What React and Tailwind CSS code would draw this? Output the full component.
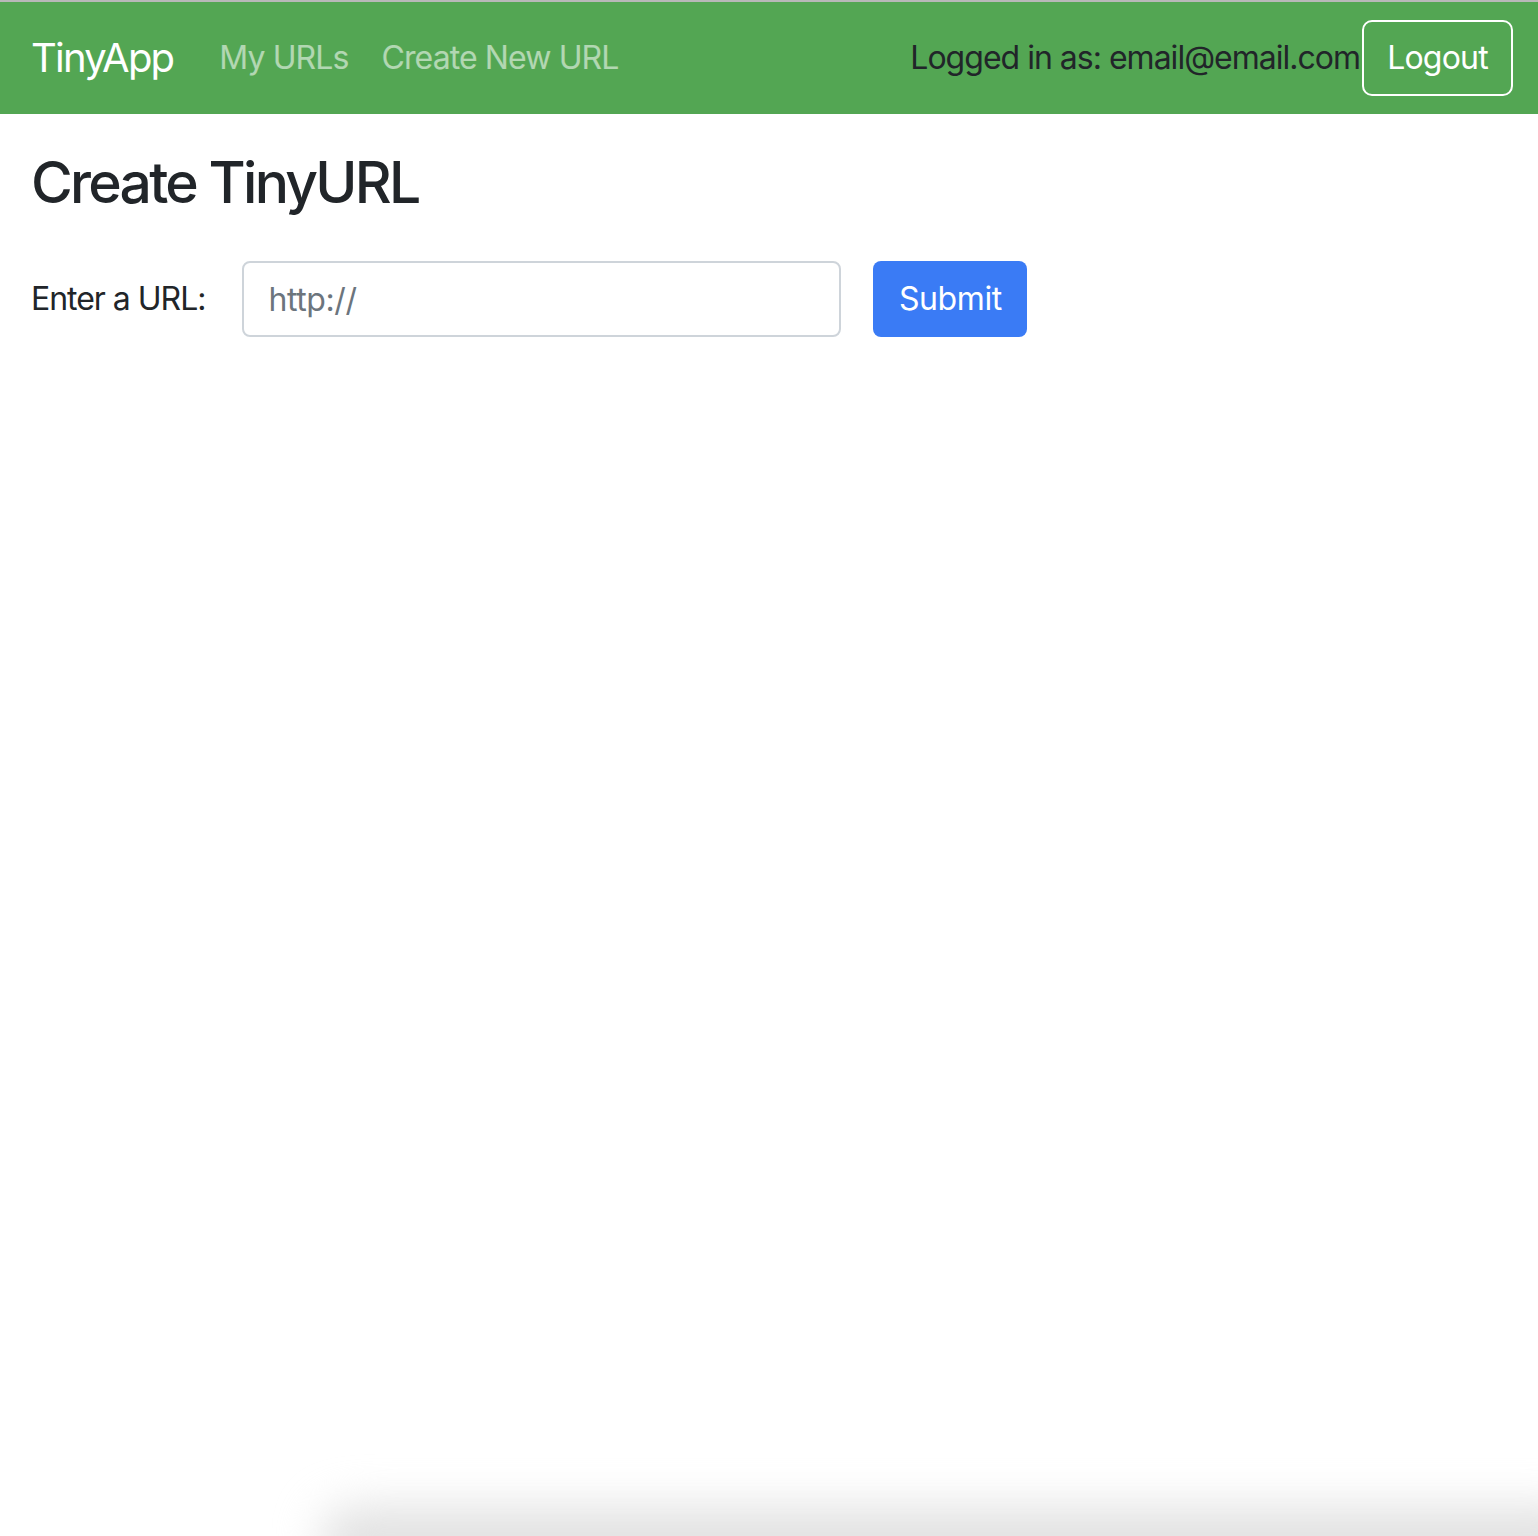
import React, { useState } from 'react';

function Navbar() {
  return (
    <nav className="flex h-[114px] items-center border-t-2 border-[#b8b8b8] bg-[#53a653] pl-[31px] pr-[25px]">
      <a href="#" className="mr-[46px] text-[40px] tracking-[-0.045em] text-white">
        TinyApp
      </a>
      <div className="flex items-center gap-[33px] text-[32px] tracking-[-0.028em] text-white/55">
        <a href="#">My URLs</a>
        <a href="#">Create New URL</a>
      </div>
      <div className="ml-auto flex items-center">
        <span className="text-[32px] tracking-[-0.031em] text-[#212529]">Logged in as: email@email.com</span>
        <button className="ml-[2px] h-[76px] w-[151px] rounded-[10px] border-2 border-white text-[32px] tracking-[-0.025em] text-white">
          Logout
        </button>
      </div>
    </nav>
  );
}

function App() {
  const [url, setUrl] = useState('');

  return (
    <div className="relative min-h-[1536px] overflow-hidden bg-white font-['Inter',sans-serif] text-[#212529]">
      <Navbar />

      <main className="px-[31px]">
        <h1 className="mt-[33px] text-[57px] font-medium leading-[72px] tracking-[-0.048em]">Create TinyURL</h1>

        <form className="mt-[42px] flex items-center tracking-[-0.025em]" onSubmit={(e) => e.preventDefault()}>
          <label className="mr-[37px] text-[32px] tracking-[-0.032em]">Enter a URL:</label>
          <input
            type="text"
            placeholder="http://"
            value={url}
            onChange={(e) => setUrl(e.target.value)}
            className="h-[76px] w-[599px] rounded-[8px] border-2 border-[#ced4da] px-[24px] text-[32px] outline-none placeholder:text-[#6c757d]"
          />
          <button type="submit" className="ml-[32px] h-[76px] w-[154px] rounded-[8px] bg-[#3a7bf5] text-[32px] text-white">
            Submit
          </button>
        </form>
      </main>

      {/* soft shadow at the bottom edge */}
      <div className="pointer-events-none absolute bottom-[-40px] left-[320px] right-[-60px] h-[70px] rounded-[40px] bg-[#e2e2e2] blur-[22px]" />
    </div>
  );
}

export default App;
